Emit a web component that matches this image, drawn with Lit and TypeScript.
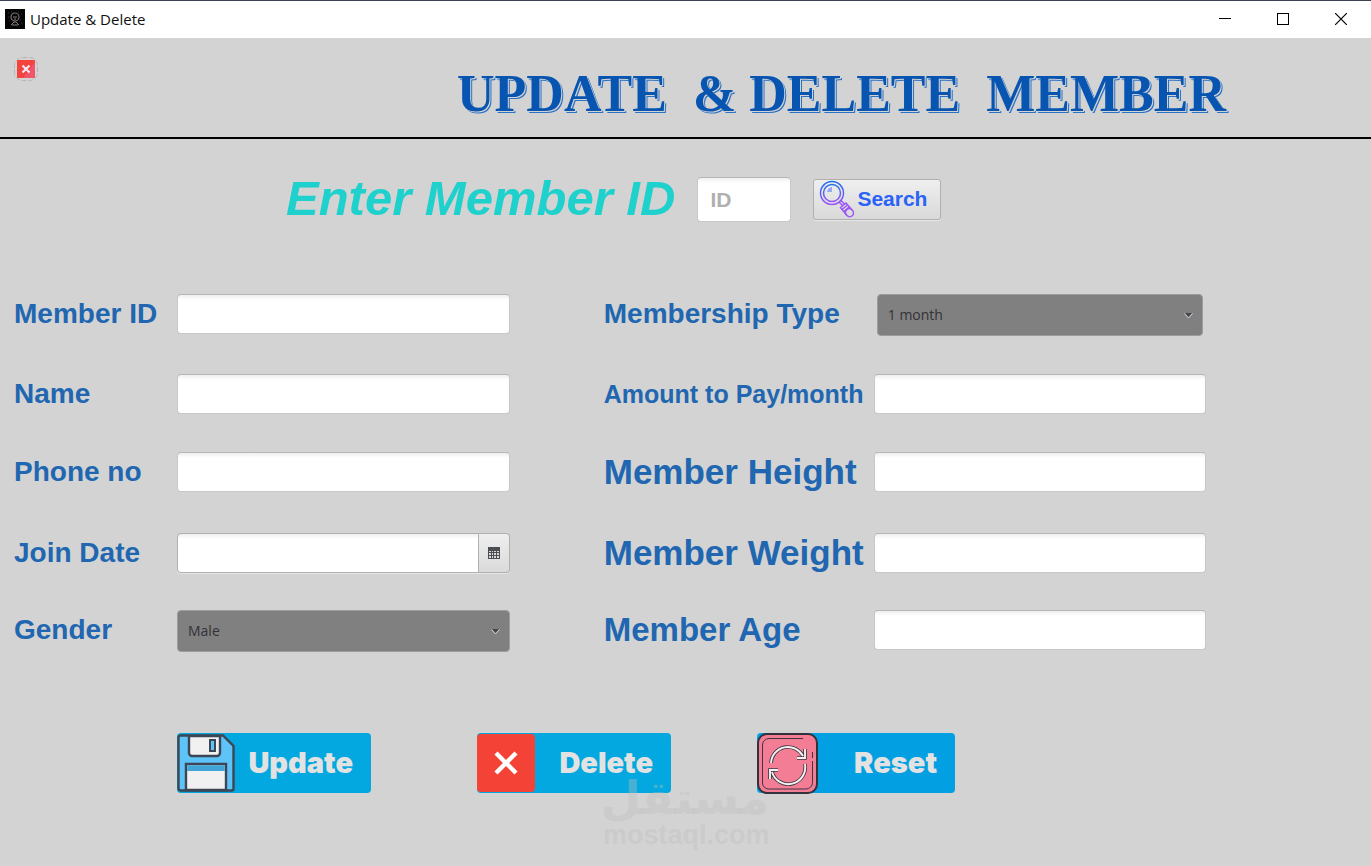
import { LitElement, html, css, svg } from "lit";
import { customElement } from "lit/decorators.js";

const appIcon = svg`<svg class="app-icon" viewBox="0 0 20 20" aria-hidden="true">
  <rect width="20" height="20" fill="#050505"/>
  <circle cx="10" cy="8" r="4" fill="none" stroke="#77706f" stroke-width="1.2"/>
  <path d="M8 8h4M9 10h2M10 12v2M6 16l3-3M14 16l-3-3M7 16h6" stroke="#8a7f7f" fill="none"/>
  <path d="M3 4h1M16 5h1M4 12h1M15 11h1M6 3h1M13 3h1M3 8h1M16 14h1" stroke="#3d3d3d"/>
</svg>`;

const closeIcon = svg`<svg class="close-icon" viewBox="0 0 24 24" aria-hidden="true">
  <rect x="0.5" y="0.5" width="23" height="23" rx="8" fill="none" stroke="#b9b4b4" stroke-dasharray="5 2"/>
  <rect x="3" y="3" width="18" height="18" rx="1" fill="#f4433c"/>
  <path d="M21 5v15a1 1 0 0 1-1 1H9z" fill="#f0566a"/>
  <path d="M8.500 8.500l7 7M15.500 8.500l-7 7" stroke="#f3e6fa" stroke-width="2.200"/>
</svg>`;

const searchIcon = svg`<svg class="search-icon" viewBox="0 0 36 38" aria-hidden="true">
  <defs><linearGradient id="lens" x1="0" y1="0" x2="0" y2="1">
    <stop offset="0" stop-color="#1f6ff2"/><stop offset="1" stop-color="#9a55f8"/>
  </linearGradient></defs>
  <g fill="none" stroke-width="1.500">
    <circle cx="13" cy="13" r="11.500" stroke="url(#lens)"/>
    <circle cx="13" cy="13" r="8.500" stroke="url(#lens)"/>
    <path d="M20 22l4 4M22 20.500l4 4" stroke="#9a55f8"/>
    <path d="M21.500 27.500l5.500-4.500 6.500 7.500a3.600 3.600 0 0 1-5.500 5z" stroke="#9a55f8"/>
    <path d="M23 29.500l5.500-4.500M25 31.500l5-4.500M27.500 35a3.500 3.500 0 0 1 5.500-5" stroke="#9a55f8"/>
  </g>
  <path d="M8 12a6 6 0 0 1 5-5v5z" fill="#9aa8f3"/>
</svg>`;

const calendarIcon = svg`<svg class="calendar-icon" viewBox="0 0 12 12" aria-hidden="true">
  <rect width="12" height="12" fill="#4a4e53"/>
  <path d="M1 4h2v1H1zM4 4h1v1H4zM6 4h2v1H6zM9 4h2v1H9zM1 6h2v2H1zM4 6h1v2H4zM6 6h2v2H6zM9 6h2v2H9zM1 9h2v2H1zM4 9h1v2H4zM6 9h2v2H6zM9 9h2v2H9z" fill="#d8d8d8"/>
</svg>`;

const floppyIcon = svg`<svg class="floppy" viewBox="0 0 58 58" aria-hidden="true">
  <path d="M3 1.500h43L56.500 12v42.500a2 2 0 0 1-2 2H4a2.500 2.500 0 0 1-2.500-2.500V3.500a2 2 0 0 1 2-2z" fill="#5ec3f7" stroke="#3d4654" stroke-width="2.400"/>
  <path d="M12 2v17a3 3 0 0 0 3 3h25a3 3 0 0 0 3-3V2z" fill="#f1f1f1" stroke="#3d4654" stroke-width="2.400"/>
  <rect x="33" y="6" width="5" height="11" fill="#5ec3f7" stroke="#3d4654" stroke-width="2"/>
  <path d="M9 56V30h40v26z" fill="#f1f1f1" stroke="#3d4654" stroke-width="2.400"/>
  <path d="M10.200 31.200h37.600V37H10.200z" fill="#41a5d8"/>
</svg>`;

const deleteIcon = svg`<svg class="cross" viewBox="0 0 58 58" aria-hidden="true">
  <rect width="58" height="58" rx="4" fill="#f44336"/>
  <path d="M19 19l20 20M39 19L19 39" stroke="#fff" stroke-width="4.400"/>
</svg>`;

const resetIcon = svg`<svg class="refresh" viewBox="0 0 61 61" aria-hidden="true">
  <rect x="1" y="1" width="59" height="59" rx="9" fill="#f47d96" stroke="#33313b" stroke-width="2"/>
  <path d="M46 5.500H12A6.500 6.500 0 0 0 5.500 12v38a6 6 0 0 0 6 6H49a6.500 6.500 0 0 0 6.500-6.500V28M55.500 25v-6" fill="none" stroke="#3f3540" stroke-width="1"/>
  <g fill="none" stroke="#3b3740" stroke-width="3.600">
    <path d="M14 30A17 17 0 0 1 46 23M40 25h8v-9"/>
    <path d="M48 31A17 17 0 0 1 15 39M21 37h-8v9"/>
  </g>
  <g fill="none" stroke="#f6f2f3" stroke-width="1.900">
    <path d="M14 30A17 17 0 0 1 46 23M40 25h8v-9"/>
    <path d="M48 31A17 17 0 0 1 15 39M21 37h-8v9"/>
  </g>
</svg>`;

const caret = svg`<svg class="caret" viewBox="0 0 9 7" aria-hidden="true">
  <path d="M0.500 1.500L4.500 6l4-4.500" fill="none" stroke="#d5d5d5"/>
  <path d="M1 1h7L4.500 5z" fill="#41474e"/>
</svg>`;

@customElement("app-root")
export class AppRoot extends LitElement {
  static styles = css`
    :host {
      display: block;
      font-family: "Liberation Sans", Arial, sans-serif;
    }
    * { box-sizing: border-box; }
    button, input, select { font: inherit; margin: 0; }
    svg { display: block; flex: none; }
    .window {
      position: relative;
      display: flex;
      flex-direction: column;
      min-height: 100vh;
      background: #d3d3d3;
    }
    .titlebar {
      display: flex;
      align-items: center;
      height: 38px;
      padding: 0 1px 1px 5px;
      border-top: 1px solid #3c4254;
      background: #fff;
      font-family: "Open Sans", "Noto Sans", sans-serif;
      font-size: 15px;
      color: #111;
    }
    .app-icon { width: 20px; height: 20px; margin-right: 5px; }
    .caption { flex: 1; }
    .control {
      display: grid;
      place-items: center;
      width: 58px;
      height: 36px;
      padding: 0;
      border: 0;
      background: none;
    }
    .control svg { width: 12px; height: 12px; }
    .header {
      display: flex;
      justify-content: space-between;
      align-items: flex-start;
      height: 101px;
      padding: 19px 145px 0 14px;
      border-bottom: 2px solid #000;
    }
    .icon-button { padding: 0; border: 0; background: none; }
    .close-icon { width: 24px; height: 24px; }
    h1 {
      margin: 7px 0 0;
      font: bold 52px/60px "Liberation Serif", serif;
      color: #0855b1;
      white-space: pre;
      text-shadow: 1px 1px 0 #d3d3d3, 2px 2px 0 #2a72c4;
    }
    .lookup {
      display: flex;
      align-items: center;
      padding: 38px 0 0 286px;
    }
    .lookup-label {
      margin-right: 22px;
      padding-bottom: 3px;
      font: italic bold 49px/42px "Liberation Sans", sans-serif;
      color: #1fd1cc;
      white-space: nowrap;
    }
    .field {
      width: 100%;
      height: 40px;
      padding: 0 12px;
      border: 1px solid #c8c8c8;
      border-top-color: #b6b6b6;
      border-radius: 4px;
      background: linear-gradient(#efefef, #fff 5px);
      outline: none;
    }
    .lookup .field {
      width: 94px;
      height: 45px;
      margin-right: 22px;
      font-size: 21px;
      font-weight: bold;
    }
    .field::placeholder { color: #b0b0b0; opacity: 1; }
    .search {
      display: flex;
      align-items: center;
      gap: 2px;
      height: 41px;
      padding: 0 13px 2px 5px;
      border: 1px solid #b0b0b0;
      border-radius: 3px;
      background: linear-gradient(#efefef, #d9d9d9);
      box-shadow: 0 1px 0 #e6e6e6;
      font-size: 21px;
      font-weight: bold;
      color: #2a63f6;
    }
    .search-icon { width: 36px; height: 38px; }
    .form {
      display: grid;
      grid-template-columns: 163px minmax(0, 1fr) 94px 270px minmax(0, 1fr);
      grid-template-rows: 80px 78px 81px 77px 42px;
      align-items: start;
      margin-top: 72px;
      padding: 0 12% 0 14px;
    }
    .label {
      font-size: 28px;
      font-weight: bold;
      line-height: 40px;
      color: #2066b0;
      white-space: nowrap;
    }
    .right { grid-column: 4; }
    .compact { font-size: 25px; }
    .large { font-size: 35px; }
    .medium { font-size: 33px; }
    .date { display: flex; }
    .date .field {
      border-color: #b0b0b0;
      border-radius: 4px 0 0 4px;
      box-shadow: 0 1px 0 #e6e6e6;
    }
    .date-button {
      display: grid;
      place-items: center;
      flex: none;
      width: 31px;
      padding: 0;
      border: 1px solid #b0b0b0;
      border-left: 0;
      border-radius: 0 4px 4px 0;
      background: linear-gradient(#efefef, #dadada);
      box-shadow: 0 1px 0 #e6e6e6;
    }
    .calendar-icon { width: 12px; height: 12px; }
    .picker { position: relative; }
    .inset { margin: 0 3px; }
    .picker select {
      display: block;
      appearance: none;
      width: 100%;
      height: 42px;
      padding: 0 10px 2px;
      border: 1px solid #9c9c9c;
      border-radius: 4px;
      background: #808080;
      font-family: "Open Sans", "Noto Sans", sans-serif;
      font-size: 14px;
      color: #333237;
    }
    .caret {
      position: absolute;
      right: 10px;
      top: 18px;
      width: 9px;
      height: 7px;
      pointer-events: none;
    }
    .actions {
      display: grid;
      grid-template-columns: 300px 280px 198px;
      align-items: center;
      margin-top: 81px;
      padding-left: 177px;
    }
    .action {
      display: flex;
      align-items: center;
      width: 194px;
      height: 60px;
      padding: 0;
      border: 0;
      border-radius: 4px;
      background: #02a8df;
      font: 900 29px/60px Inter, sans-serif;
      color: #e2e2e2;
    }
    .action span { flex: 1; padding-right: 18px; text-align: right; }
    .action.reset { width: 198px; background: #02a0e2; }
    .floppy, .cross { width: 58px; height: 58px; }
    .refresh { width: 61px; height: 61px; }
    .watermark {
      position: absolute;
      left: 603px;
      top: 775px;
      width: 166px;
      color: rgba(190, 190, 190, 0.4);
      font-weight: bold;
      text-align: center;
      pointer-events: none;
    }
    .arabic { font-family: "DejaVu Sans", sans-serif; font-size: 46px; line-height: 46px; }
    .latin { font-size: 27px; line-height: 28px; }
  `;

  private textField(id: string) {
    return html`<input class="field" id=${id} type="text" />`;
  }

  private picker(id: string, options: string[], extra = "") {
    return html`<div class="picker ${extra}">
      <select id=${id}>${options.map((o) => html`<option>${o}</option>`)}</select>
      ${caret}
    </div>`;
  }

  render() {
    return html`
      <div class="window">
        <div class="titlebar">
          ${appIcon}
          <span class="caption">Update &amp; Delete</span>
          <button class="control" aria-label="Minimize">
            <svg viewBox="0 0 12 12"><path d="M0 5.500h12" stroke="#000" /></svg>
          </button>
          <button class="control" aria-label="Maximize">
            <svg viewBox="0 0 12 12"><rect x="0.500" y="0.500" width="11" height="11" fill="none" stroke="#000" /></svg>
          </button>
          <button class="control" aria-label="Close">
            <svg viewBox="0 0 12 12"><path d="M0 0l12 12M12 0L0 12" stroke="#000" stroke-width="1.200" /></svg>
          </button>
        </div>
        <header class="header">
          <button class="icon-button" aria-label="Back">${closeIcon}</button>
          <h1>UPDATE  &amp; DELETE  MEMBER</h1>
        </header>
        <div class="lookup">
          <label class="lookup-label" for="lookup">Enter Member ID</label>
          <input class="field" id="lookup" type="text" placeholder="ID" />
          <button class="search">${searchIcon}Search</button>
        </div>
        <div class="form">
          <label class="label" for="member-id">Member ID</label>
          ${this.textField("member-id")}
          <label class="label right" for="type">Membership Type</label>
          ${this.picker("type", ["1 month", "3 months", "6 months", "12 months"], "inset")}

          <label class="label" for="name">Name</label>
          ${this.textField("name")}
          <label class="label right compact" for="amount">Amount to Pay/month</label>
          ${this.textField("amount")}

          <label class="label" for="phone">Phone no</label>
          ${this.textField("phone")}
          <label class="label right large" for="height">Member Height</label>
          ${this.textField("height")}

          <label class="label" for="join">Join Date</label>
          <div class="date">
            ${this.textField("join")}
            <button class="date-button" aria-label="Choose date">${calendarIcon}</button>
          </div>
          <label class="label right large" for="weight">Member Weight</label>
          ${this.textField("weight")}

          <label class="label" for="gender">Gender</label>
          ${this.picker("gender", ["Male", "Female"])}
          <label class="label right medium" for="age">Member Age</label>
          ${this.textField("age")}
        </div>
        <div class="actions">
          <button class="action">${floppyIcon}<span>Update</span></button>
          <button class="action">${deleteIcon}<span>Delete</span></button>
          <button class="action reset">${resetIcon}<span>Reset</span></button>
        </div>
        <div class="watermark">
          <div class="arabic" lang="ar" dir="rtl">مستقل</div>
          <div class="latin">mostaql.com</div>
        </div>
      </div>
    `;
  }
}
